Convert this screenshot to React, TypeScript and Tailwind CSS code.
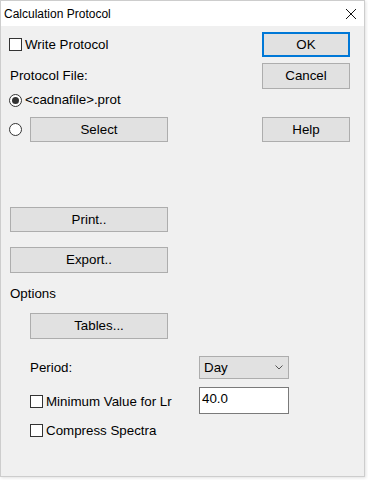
import React from "react";

const font = { fontFamily: '"Liberation Sans", Arial, sans-serif' };

function Btn({ children, className = "" }: { children: React.ReactNode; className?: string }) {
  return (
    <div
      className={`flex items-center justify-center bg-[#e1e1e1] border border-[#adadad] text-[13.33px] text-black ${className}`}
    >
      {children}
    </div>
  );
}

function Check({ label }: { label: string }) {
  return (
    <div className="flex items-center">
      <div className="w-[13px] h-[13px] bg-white border border-[#333333]" />
      <span className="ml-[3px] text-[13.33px] text-black leading-none">{label}</span>
    </div>
  );
}

function Radio({ checked }: { checked?: boolean }) {
  return (
    <div className="w-[13px] h-[13px] rounded-full bg-white border border-[#333333] flex items-center justify-center">
      {checked && <div className="w-[7px] h-[7px] rounded-full bg-[#333333]" />}
    </div>
  );
}

export default function App() {
  return (
    <div className="w-[368px] h-[480px] bg-white" style={font}>
      <div className="w-[365px] h-[477px] border border-[#cdcdcd] bg-[#f0f0f0] flex flex-col shadow-[1px_1px_3px_rgba(0,0,0,0.12)]">
        <div className="h-[25px] bg-white flex items-center justify-between pl-[3px] pr-[6px] shrink-0">
          <span className="text-[12px] text-black">Calculation Protocol</span>
          <svg width="12" height="12" viewBox="0 0 12 12" className="mr-[1px]">
            <path d="M1 1 L11 11 M11 1 L1 11" stroke="#111" strokeWidth="1" fill="none" />
          </svg>
        </div>
        <div className="flex flex-col pl-[8px] pr-[14px] pt-[6px]">
          {/* Row A */}
          <div className="h-[25px] flex items-center justify-between">
            <Check label="Write Protocol" />
            <div className="w-[88px] h-[25px] flex items-center justify-center bg-[#e1e1e1] border-2 border-[#0078d7] text-[13.33px] text-black">
              OK
            </div>
          </div>
          {/* Row B */}
          <div className="mt-[6px] h-[26px] flex items-center justify-between">
            <span className="ml-[1px] text-[13.33px] text-black">Protocol File:</span>
            <Btn className="w-[88px] h-[26px]">Cancel</Btn>
          </div>
          {/* Row C */}
          <div className="h-[22px] flex items-center">
            <Radio checked />
            <span className="ml-[3px] text-[13.33px] text-black">&lt;cadnafile&gt;.prot</span>
          </div>
          {/* Row D */}
          <div className="mt-[6px] h-[25px] flex items-center justify-between">
            <div className="flex items-center">
              <Radio />
              <Btn className="ml-[8px] w-[138px] h-[25px]">Select</Btn>
            </div>
            <Btn className="w-[88px] h-[25px]">Help</Btn>
          </div>
          <Btn className="mt-[65px] ml-[1px] w-[158px] h-[25px]">Print..</Btn>
          <Btn className="mt-[15px] ml-[1px] w-[158px] h-[26px]">Export..</Btn>
          <div className="mt-[11px] h-[20px] flex items-center ml-[1px] text-[13.33px] text-black">Options</div>
          <Btn className="mt-[9px] ml-[21px] w-[138px] h-[26px]">Tables...</Btn>
          {/* Period */}
          <div className="mt-[17px] h-[23px] flex items-center">
            <span className="ml-[21px] w-[169px] text-[13.33px] text-black">Period:</span>
            <div className="w-[90px] h-[23px] bg-[#e1e1e1] border border-[#adadad] flex items-center justify-between pl-[4px] pr-[5px]">
              <span className="text-[13.33px] text-black">Day</span>
              <svg width="8" height="5" viewBox="0 0 8 5">
                <path d="M0.5 0.5 L4 4 L7.5 0.5" stroke="#555" strokeWidth="1" fill="none" />
              </svg>
            </div>
          </div>
          {/* Minimum */}
          <div className="mt-[8px] h-[27px] flex items-start">
            <div className="ml-[21px] w-[169px] h-[27px] pt-[3px] flex items-center">
              <Check label="Minimum Value for Lr" />
            </div>
            <div className="w-[90px] h-[27px] bg-white border border-[#7a7a7a] pl-[2px] pt-[3px] text-[13.33px] text-black leading-[15px]">
              40.0
            </div>
          </div>
          {/* Compress */}
          <div className="h-[34px] flex items-center ml-[21px]">
            <Check label="Compress Spectra" />
          </div>
        </div>
      </div>
    </div>
  );
}
